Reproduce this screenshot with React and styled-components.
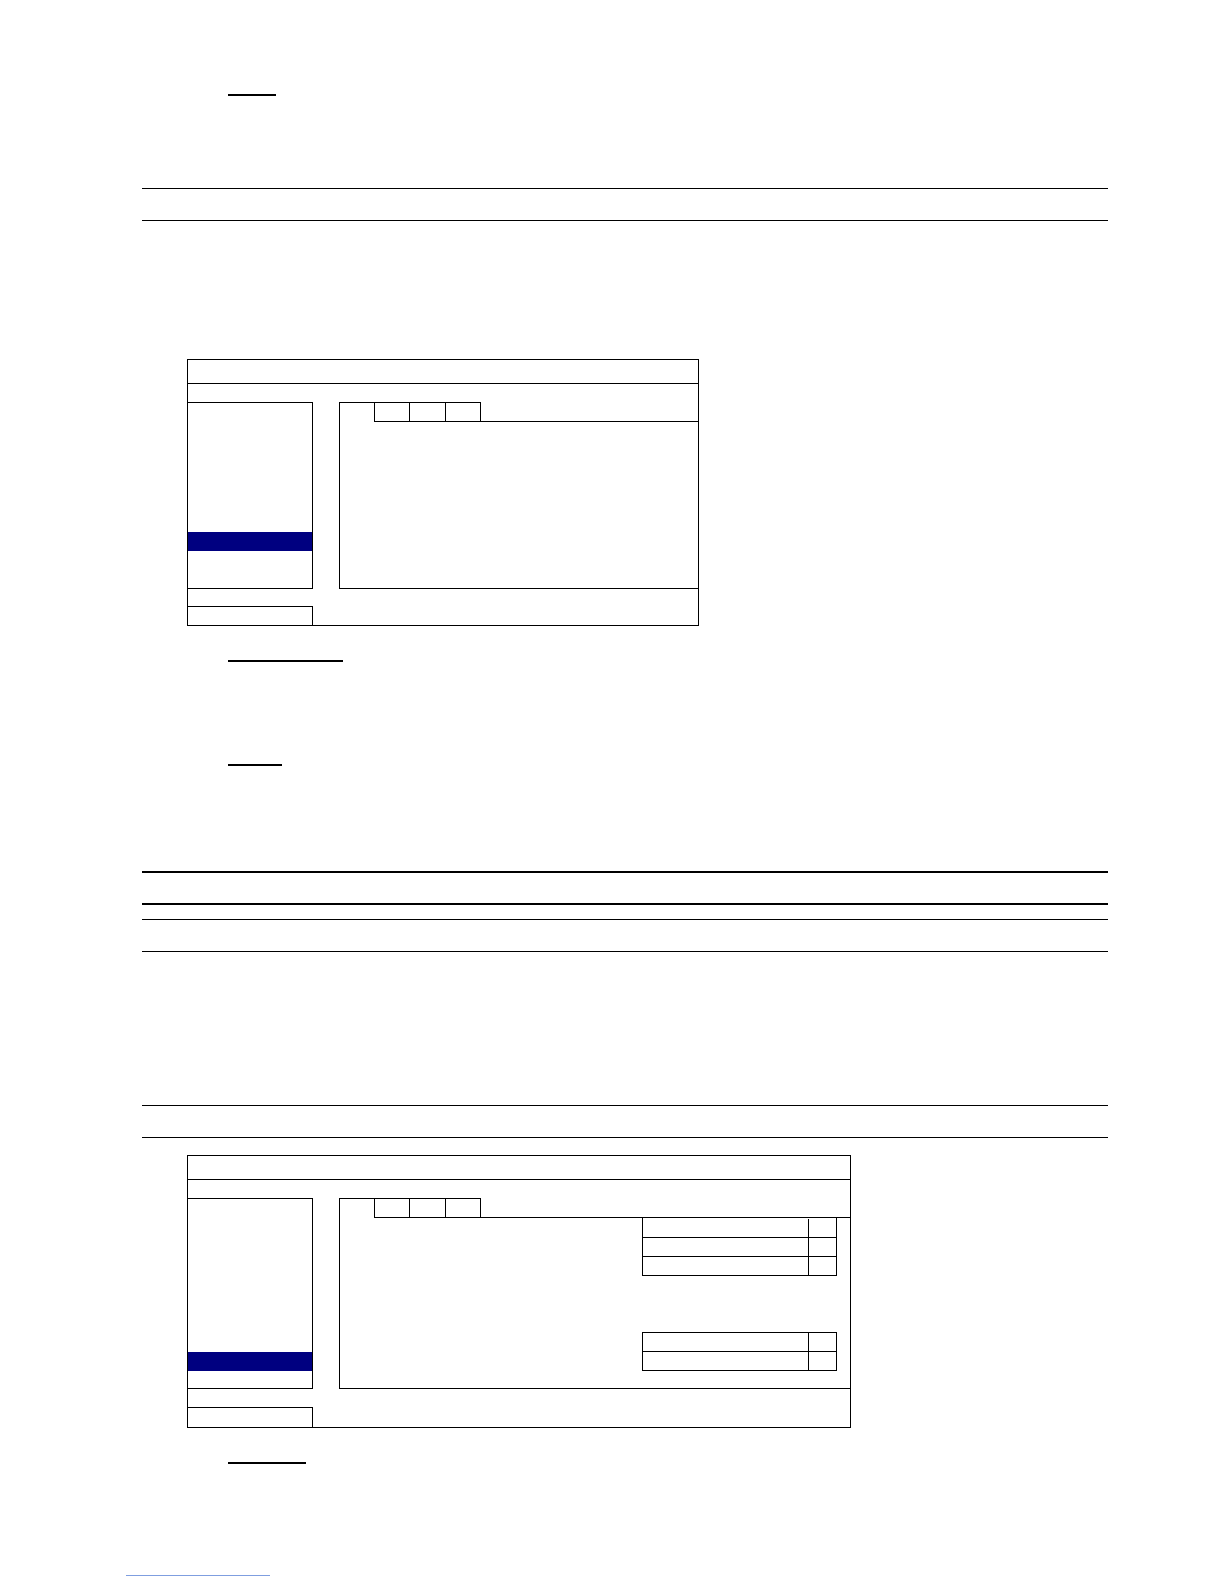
import React from "react";
import styled, { createGlobalStyle } from "styled-components";

const Global = createGlobalStyle`
  html, body { margin: 0; padding: 0; background: #fff; }
  body { font-family: "Liberation Serif", "Times New Roman", serif; }
`;

const Page = styled.div`
  width: 1224px;
  min-height: 1584px;
  box-sizing: border-box;
  padding: 0 116px 0 142px;
  display: flex;
  flex-direction: column;
  align-items: flex-start;
`;

const Underline = styled.div`
  margin-top: ${(p) => p.$top}px;
  margin-left: 86px;
  width: ${(p) => p.$w}px;
  height: 0;
  border-top: ${(p) => p.$t || 2}px solid #000;
`;

const RulePair = styled.div`
  align-self: stretch;
  margin-top: ${(p) => p.$top}px;
  box-sizing: border-box;
  height: ${(p) => p.$h}px;
  border-top: ${(p) => p.$t}px solid #000;
  border-bottom: ${(p) => p.$t}px solid #000;
`;

const Screen = styled.div`
  margin-top: ${(p) => p.$top}px;
  margin-left: 45px;
  width: ${(p) => p.$w}px;
  box-sizing: border-box;
  border: 1px solid #000;
  display: flex;
  flex-direction: column;
`;

const TitleBar = styled.div`
  height: 23px;
  border-bottom: 1px solid #000;
`;

const ScreenBody = styled.div`
  display: flex;
  gap: 26px;
  padding-top: 18px;
`;

const MenuPanel = styled.div`
  width: 125px;
  height: ${(p) => p.$h}px;
  box-sizing: border-box;
  border-top: 1px solid #000;
  border-right: 1px solid #000;
  border-bottom: 1px solid #000;
  padding-top: ${(p) => p.$pad}px;
  display: flex;
  flex-direction: column;
  flex-shrink: 0;
`;

const MenuItem = styled.div`
  height: 19px;
  flex-shrink: 0;
  background: ${(p) => (p.$active ? "#000080" : "transparent")};
`;

const RightPanel = styled.div`
  flex: 1;
  height: ${(p) => p.$h}px;
  box-sizing: border-box;
  border-left: 1px solid #000;
  border-bottom: 1px solid #000;
  display: flex;
  flex-direction: column;
`;

const TabRow = styled.div`
  display: flex;
  height: 20px;
  flex-shrink: 0;
`;

const TabLead = styled.div`
  width: 34px;
  box-sizing: border-box;
  border-top: 1px solid #000;
`;

const Tab = styled.div`
  width: ${(p) => p.$w}px;
  box-sizing: border-box;
  border-top: 1px solid #000;
  border-bottom: 1px solid #000;
  border-right: 1px solid #000;
  border-left: ${(p) => (p.$first ? "1px solid #000" : "none")};
`;

const TabFill = styled.div`
  flex: 1;
  box-sizing: border-box;
  border-bottom: 1px solid #000;
`;

const PanelContent = styled.div`
  flex: 1;
  display: flex;
  flex-direction: column;
  align-items: flex-end;
  padding-right: 13px;
`;

const OptionTable = styled.div`
  margin-top: ${(p) => p.$top || 0}px;
  padding-top: ${(p) => (p.$flush ? 1 : 0)}px;
  width: 195px;
  box-sizing: border-box;
  border: 1px solid #000;
  border-top: ${(p) => (p.$flush ? "none" : "1px solid #000")};
  display: flex;
  flex-direction: column;
`;

const OptionRow = styled.div`
  display: grid;
  grid-template-columns: 166px 27px;
  height: 18px;
  & + & {
    border-top: 1px solid #000;
  }
`;

const OptionLabel = styled.div`
  border-right: 1px solid #000;
`;

const OptionValue = styled.div``;

const ScreenFooter = styled.div`
  padding-top: ${(p) => p.$gap}px;
`;

const FooterBox = styled.div`
  width: 125px;
  height: ${(p) => p.$h}px;
  box-sizing: border-box;
  border-top: 1px solid #000;
  border-right: 1px solid #000;
`;

const LinkLine = styled.div`
  margin-top: ${(p) => p.$top}px;
  margin-left: -16px;
  width: 144px;
  height: 0;
  border-top: 1px solid #7f9ee0;
`;

function DvrScreen({ top, width, panelHeight, footerGap, footerHeight, menuPad, activeIndex, menuCount, children }) {
  return (
    <Screen $top={top} $w={width}>
      <TitleBar />
      <ScreenBody>
        <MenuPanel $h={panelHeight} $pad={menuPad}>
          {Array.from({ length: menuCount }).map((_, i) => (
            <MenuItem key={i} $active={i === activeIndex} />
          ))}
        </MenuPanel>
        <RightPanel $h={panelHeight}>
          <TabRow>
            <TabLead />
            <Tab $first $w={36} />
            <Tab $w={36} />
            <Tab $w={35} />
            <TabFill />
          </TabRow>
          <PanelContent>{children}</PanelContent>
        </RightPanel>
      </ScreenBody>
      <ScreenFooter $gap={footerGap}>
        <FooterBox $h={footerHeight} />
      </ScreenFooter>
    </Screen>
  );
}

function Table({ rows, flush, top }) {
  return (
    <OptionTable $flush={flush} $top={top}>
      {Array.from({ length: rows }).map((_, i) => (
        <OptionRow key={i}>
          <OptionLabel />
          <OptionValue />
        </OptionRow>
      ))}
    </OptionTable>
  );
}

export default function App() {
  return (
    <>
      <Global />
      <Page>
        <Underline $top={94} $w={48} />
        <RulePair $top={92} $h={33} $t={1} />
        <DvrScreen
          top={138}
          width={512}
          panelHeight={187}
          footerGap={17}
          footerHeight={19}
          menuPad={15}
          activeIndex={6}
          menuCount={8}
        />
        <Underline $top={34} $w={115} />
        <Underline $top={102} $w={54} />
        <RulePair $top={105} $h={34} $t={2} />
        <RulePair $top={14} $h={33} $t={1} />
        <RulePair $top={153} $h={33} $t={1} />
        <DvrScreen
          top={17}
          width={664}
          panelHeight={191}
          footerGap={18}
          footerHeight={20}
          menuPad={20}
          activeIndex={7}
          menuCount={9}
        >
          <Table rows={3} flush />
          <Table rows={2} top={56} />
        </DvrScreen>
        <Underline $top={34} $w={78} />
        <LinkLine $top={111} />
      </Page>
    </>
  );
}
